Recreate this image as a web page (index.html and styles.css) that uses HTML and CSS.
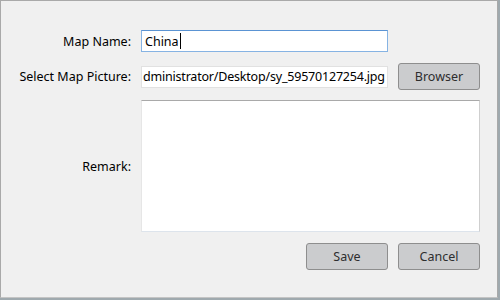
FILE: index.html
```html
<!DOCTYPE html>
<html lang="en">
<head>
	<meta charset="UTF-8">
	<title>Map Settings</title>
	<link rel="stylesheet" href="styles.css">
</head>
<body>
	<div class="window">
		<form class="map-form">
			<label class="field-label">Map Name:</label>
			<div class="text-box focused">China<span class="caret"></span></div>

			<label class="field-label">Select Map Picture:</label>
			<div class="row-pair">
				<div class="text-box path">dministrator/Desktop/sy_59570127254.jpg</div>
				<button type="button" class="btn">Browser</button>
			</div>

			<label class="field-label">Remark:</label>
			<div class="remark-box"></div>

			<div class="actions">
				<button type="button" class="btn">Save</button>
				<button type="button" class="btn">Cancel</button>
			</div>
		</form>
	</div>
</body>
</html>
```

FILE: styles.css
```css
* {
	margin: 0;
	padding: 0;
	box-sizing: border-box;
}

/* Desktop behind the dialog */
body {
	width: 500px;
	height: 300px;
	background: #9fa9ae;
	font-family: 'Noto Sans', sans-serif;
	font-size: 12.5px;
	color: #000;
	overflow: hidden;
}

/* Dialog window */
.window {
	width: 498px;
	height: 298px;
	background: #f0f0f0;
	border: 1px solid #a9a9a9;
	border-bottom-color: #c4c4c4;
}

.map-form {
	display: grid;
	grid-template-columns: 130px 247px 82px;
	grid-template-rows: 23px 27px 133px 27px;
	column-gap: 10px;
	row-gap: 10px;
	padding-top: 29px;
}

.field-label {
	grid-column: 1;
	display: flex;
	align-items: center;
	justify-content: flex-end;
	white-space: nowrap;
}

.field-label:first-child {
	height: 22px;
}

/* Second row spans the field and button columns */
.row-pair {
	grid-column: 2 / 4;
	display: flex;
	align-items: center;
	gap: 10px;
}

.text-box {
	grid-column: 2;
	height: 22px;
	background: #FFF;
	border: 1px solid #e1e1e1;
	display: flex;
	align-items: center;
	padding-left: 3px;
	white-space: nowrap;
	overflow: hidden;
}

.text-box.focused {
	border-color: #86b3e3;
	border-top-color: #5a93d3;
}

.text-box.path {
	width: 247px;
	flex-shrink: 0;
	padding-left: 1px;
	letter-spacing: -0.2px;
}

.caret {
	display: inline-block;
	width: 1px;
	height: 16px;
	background: #000;
	margin-left: 1px;
}

.remark-box {
	grid-column: 2 / 4;
	height: 132px;
	background: #FFF;
	border: 1px solid #e6e6e6;
	border-top-color: #a9a9a9;
	border-right-color: #cfcfcf;
	border-bottom-color: #dde4ec;
}

.actions {
	grid-column: 2 / 4;
	display: flex;
	justify-content: flex-end;
	gap: 10px;
}

.btn {
	width: 82px;
	height: 27px;
	background: #cbccce;
	border: 1px solid #8e8e8e;
	border-radius: 3px;
	font-family: 'Noto Sans', sans-serif;
	font-size: 12.5px;
	color: #2e2e2e;
}
```
